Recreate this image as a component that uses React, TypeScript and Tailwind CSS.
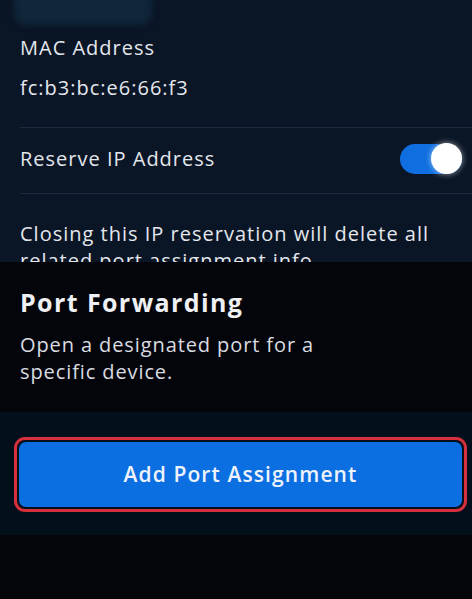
import React from "react";

export default function App() {
  return (
    <div
      className="w-[472px] h-[599px] overflow-hidden bg-[#04050b] text-[#e4e7ec]"
      style={{ fontFamily: "'Open Sans', Lato, sans-serif" }}
    >
      {/* Top settings panel */}
      <div className="relative h-[262px] overflow-hidden bg-[#0a1526] pl-5">
        <div className="absolute left-[14px] top-[-20px] h-[45px] w-[138px] rounded-xl bg-[#10263a] blur-[3px]" />
        <div className="relative pt-[34px] tracking-[1px]">
          <div className="text-[20px] leading-[28px]">MAC Address</div>
          <div className="mt-[12px] text-[20px] leading-[28px]">fc:b3:bc:e6:66:f3</div>
          <div className="mt-[25px] h-px bg-[#1b2a3e]" />
          <div className="flex h-[65px] items-center justify-between pb-[4px] pr-[10px]">
            <span className="text-[20px] leading-[28px]">Reserve IP Address</span>
            <div className="flex h-[30px] w-[62px] items-center justify-end rounded-full bg-[#0f6fe0]">
              <div className="h-[31px] w-[31px] rounded-full bg-white shadow-[0_0_6px_rgba(255,255,255,0.6)]" />
            </div>
          </div>
          <div className="h-px bg-[#1b2a3e]" />
          <div className="w-[440px] pt-[26px] text-[20px] leading-[27px]">
            Closing this IP reservation will delete all related port assignment info.
          </div>
        </div>
      </div>

      {/* Port forwarding sheet */}
      <div className="bg-[#04050b] px-5 pt-[24px]">
        <div className="text-[25px] font-bold leading-[32px] tracking-[1.4px] text-[#eef0f3]">Port Forwarding</div>
        <div className="mt-[13px] w-[340px] text-[20px] leading-[27px] tracking-[0.9px] text-[#d9dce1]">
          Open a designated port for a specific device.
        </div>
      </div>

      <div className="mt-[27px] h-[123px] bg-[#040f1c] pl-[14px] pr-[5px] pt-[25px]">
        <div className="w-full rounded-[11px] border-[3px] border-[#d6303d] p-[2px]">
          <button className="flex h-[65px] w-full items-center justify-center rounded-[7px] bg-[#0b6fe2] text-[21px] font-semibold tracking-[1.1px] text-[#eef3fb]">
            Add Port Assignment
          </button>
        </div>
      </div>
    </div>
  );
}
